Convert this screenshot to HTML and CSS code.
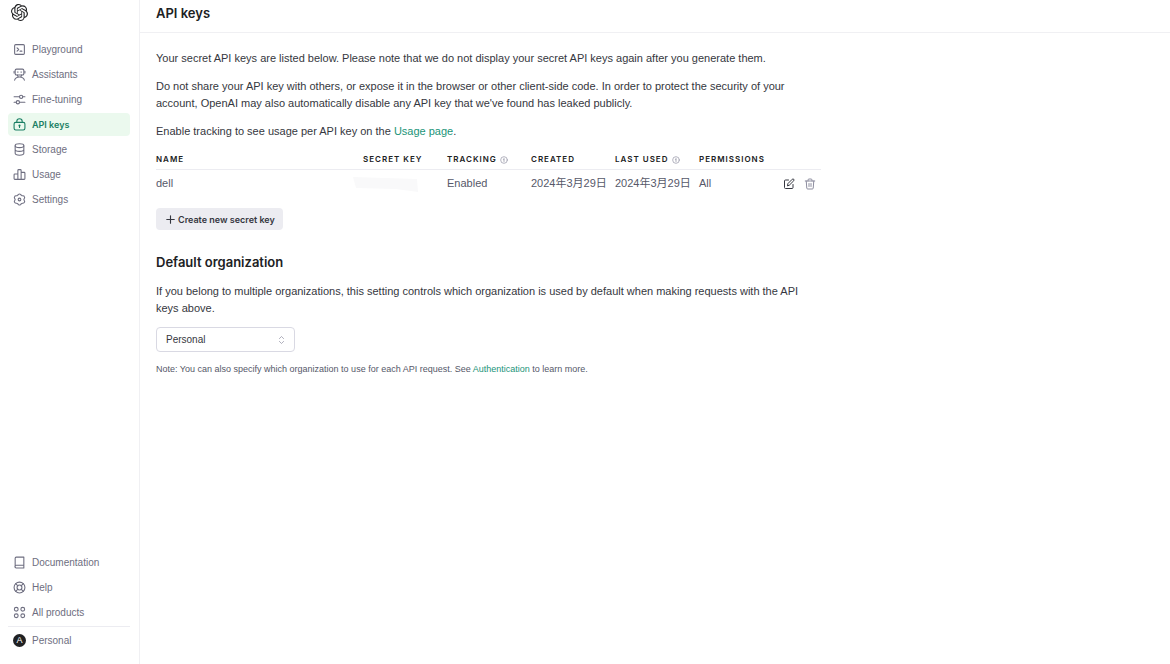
FILE: index.html
```html
<!DOCTYPE html>
<html lang="en">
<head>
    <meta charset="UTF-8">
    <meta name="viewport" content="width=device-width, initial-scale=1.0">
    <title>API keys</title>
    <link rel="stylesheet" href="styles.css">
</head>
<body>
    <aside class="sidebar">
        <a class="logo" href="#" aria-label="Home">
            <svg viewBox="0 0 24 24" fill="currentColor"><path d="M22.2819 9.8211a5.9847 5.9847 0 0 0-.5157-4.9108 6.0462 6.0462 0 0 0-6.5098-2.9A6.0651 6.0651 0 0 0 4.9807 4.1818a5.9847 5.9847 0 0 0-3.9977 2.9 6.0462 6.0462 0 0 0 .7427 7.0966 5.98 5.98 0 0 0 .511 4.9107 6.051 6.051 0 0 0 6.5146 2.9001A5.9847 5.9847 0 0 0 13.2599 24a6.0557 6.0557 0 0 0 5.7718-4.2058 5.9894 5.9894 0 0 0 3.9977-2.9001 6.0557 6.0557 0 0 0-.7475-7.0729zm-9.022 12.6081a4.4755 4.4755 0 0 1-2.8764-1.0408l.1419-.0804 4.7783-2.7582a.7948.7948 0 0 0 .3927-.6813v-6.7369l2.02 1.1686a.071.071 0 0 1 .038.052v5.5826a4.504 4.504 0 0 1-4.4945 4.4944zm-9.6607-4.1254a4.4708 4.4708 0 0 1-.5346-3.0137l.142.0852 4.783 2.7582a.7712.7712 0 0 0 .7806 0l5.8428-3.3685v2.3324a.0804.0804 0 0 1-.0332.0615L9.74 19.9502a4.4992 4.4992 0 0 1-6.1408-1.6464zM2.3408 7.8956a4.485 4.485 0 0 1 2.3655-1.9728V11.6a.7664.7664 0 0 0 .3879.6765l5.8144 3.3543-2.0201 1.1685a.0757.0757 0 0 1-.071 0l-4.8303-2.7865A4.504 4.504 0 0 1 2.3408 7.872zm16.5963 3.8558L13.1038 8.364 15.1192 7.2a.0757.0757 0 0 1 .071 0l4.8303 2.7913a4.4944 4.4944 0 0 1-.6765 8.1042v-5.6772a.79.79 0 0 0-.407-.667zm2.0107-3.0231l-.142-.0852-4.7735-2.7818a.7759.7759 0 0 0-.7854 0L9.409 9.2297V6.8974a.0662.0662 0 0 1 .0284-.0615l4.8303-2.7866a4.4992 4.4992 0 0 1 6.6802 4.66zM8.3065 12.863l-2.02-1.1638a.0804.0804 0 0 1-.038-.0567V6.0742a4.4992 4.4992 0 0 1 7.3757-3.4537l-.142.0805L8.704 5.459a.7948.7948 0 0 0-.3927.6813zm1.0976-2.3654l2.602-1.4998 2.6069 1.4998v2.9994l-2.5974 1.4997-2.6067-1.4997Z"/></svg>
        </a>

        <nav class="nav">
            <a class="nav-item" href="#">
                <svg class="icon" viewBox="0 0 24 24"><rect x="3" y="3" width="18" height="18" rx="2"/><path d="M7.500 9l3 3-3 3M13 15h3.500"/></svg>
                Playground
            </a>
            <a class="nav-item" href="#">
                <svg class="icon" viewBox="0 0 24 24"><rect x="4" y="2" width="16" height="11" rx="2.500"/><path d="M2 6v3M22 6v3M9 7v1M15 7v1M8 13l1.500 3.500M16 13l-1.500 3.500M3 22.500c1-4 4-6 9-6s8 2 9 6"/></svg>
                Assistants
            </a>
            <a class="nav-item" href="#">
                <svg class="icon" viewBox="0 0 24 24"><circle cx="15" cy="7" r="3"/><circle cx="9" cy="17" r="3"/><path d="M2 7h10M18 7h4M2 17h4M12 17h10"/></svg>
                Fine-tuning
            </a>
            <a class="nav-item active" href="#" aria-current="page">
                <svg class="icon" viewBox="0 0 24 24"><rect x="2" y="8" width="20" height="14" rx="3"/><path d="M7 8V6.500a5 5 0 0 1 10 0V8M12 14v3.500"/><circle cx="12" cy="14" r="1"/></svg>
                API keys
            </a>
            <a class="nav-item" href="#">
                <svg class="icon" viewBox="0 0 24 24"><ellipse cx="12" cy="5" rx="8" ry="3.500"/><path d="M4 5v14c0 2 3.600 3.500 8 3.500s8-1.500 8-3.500V5M4 12c0 2 3.600 3.500 8 3.500s8-1.500 8-3.500"/></svg>
                Storage
            </a>
            <a class="nav-item" href="#">
                <svg class="icon" viewBox="0 0 24 24"><path d="M9 21V4.500A1.500 1.500 0 0 1 10.500 3h3A1.500 1.500 0 0 1 15 4.500V21zM9 21H3.500A1.500 1.500 0 0 1 2 19.500v-7A1.500 1.500 0 0 1 3.500 11H9M15 8h5.500A1.500 1.500 0 0 1 22 9.500v10a1.500 1.500 0 0 1-1.500 1.500H15"/></svg>
                Usage
            </a>
            <a class="nav-item" href="#">
                <svg class="icon" viewBox="0 0 24 24"><path d="M10 2.500q2-1.500 4 0l1.500 2q1 .8 2.500.7 2.500-.2 3.200 2 .8 1.800-.6 3.300-1 1.500 0 3 1.400 1.500.6 3.300-.7 2.200-3.200 2-1.500-.1-2.500.7l-1.500 2q-2 1.500-4 0l-1.500-2q-1-.8-2.500-.7-2.500.2-3.200-2-.8-1.800.6-3.300 1-1.500 0-3Q2 9 2.800 7.200q.7-2.200 3.200-2 1.500.1 2.500-.7z"/><circle cx="12" cy="12" r="2.500"/></svg>
                Settings
            </a>
        </nav>

        <nav class="nav nav-bottom">
            <a class="nav-item" href="#">
                <svg class="icon" viewBox="0 0 24 24"><path d="M4 19.500V4a2 2 0 0 1 2-2h14v20H6a2 2 0 0 1 0-5h14"/></svg>
                Documentation
            </a>
            <a class="nav-item" href="#">
                <svg class="icon" viewBox="0 0 24 24"><circle cx="12" cy="12" r="10"/><circle cx="12" cy="12" r="4.500"/><path d="M5 5l4 4M19 5l-4 4M5 19l4-4M19 19l-4-4"/></svg>
                Help
            </a>
            <a class="nav-item" href="#">
                <svg class="icon" viewBox="0 0 24 24"><circle cx="6" cy="6" r="3.500"/><circle cx="18" cy="6" r="3.500"/><circle cx="6" cy="18" r="3.500"/><circle cx="18" cy="18" r="3.500"/></svg>
                All products
            </a>
        </nav>
        <div class="account">
            <a class="nav-item" href="#">
                <span class="avatar">A</span>
                Personal
            </a>
        </div>
    </aside>

    <main class="main">
        <header class="page-header">
            <h1>API keys</h1>
        </header>

        <div class="content">
            <p>Your secret API keys are listed below. Please note that we do not display your secret API keys again after you generate them.</p>
            <p>Do not share your API key with others, or expose it in the browser or other client-side code. In order to protect the security of your account, OpenAI may also automatically disable any API key that we've found has leaked publicly.</p>
            <p>Enable tracking to see usage per API key on the <a href="#">Usage page</a>.</p>

            <table class="keys">
                <thead>
                    <tr>
                        <th class="col-name">Name</th>
                        <th class="col-data">Secret key</th>
                        <th class="col-data">Tracking <svg class="info" viewBox="0 0 24 24"><circle cx="12" cy="12" r="10"/><path d="M12 11v6M12 7v1M10 11h2"/></svg></th>
                        <th class="col-data">Created</th>
                        <th class="col-data">Last used <svg class="info" viewBox="0 0 24 24"><circle cx="12" cy="12" r="10"/><path d="M12 11v6M12 7v1M10 11h2"/></svg></th>
                        <th class="col-data">Permissions</th>
                        <th class="col-actions"></th>
                    </tr>
                </thead>
                <tbody>
                    <tr>
                        <td>dell</td>
                        <td><svg class="redacted" viewBox="0 0 70 20"><path d="M2 3l64 2 1 13-22-3-40-1z"/></svg></td>
                        <td>Enabled</td>
                        <td>2024年3月29日</td>
                        <td>2024年3月29日</td>
                        <td>All</td>
                        <td>
                            <div class="actions">
                                <button class="icon-btn edit" aria-label="Edit">
                                    <svg class="icon" viewBox="0 0 24 24"><path d="M11 4H5a2 2 0 0 0-2 2v13a2 2 0 0 0 2 2h13a2 2 0 0 0 2-2v-6M9 15l1-4 8.500-8.500a2 2 0 0 1 3 3L13 14z"/></svg>
                                </button>
                                <button class="icon-btn" aria-label="Delete">
                                    <svg class="icon" viewBox="0 0 24 24"><path d="M2.500 6h19M8 6V4a2 2 0 0 1 2-2h4a2 2 0 0 1 2 2v2M4.500 6l1 14a2 2 0 0 0 2 2h9a2 2 0 0 0 2-2l1-14M10 11v6M14 11v6"/></svg>
                                </button>
                            </div>
                        </td>
                    </tr>
                </tbody>
            </table>

            <button class="btn">
                <svg viewBox="0 0 24 24"><path d="M12 2v20M2 12h20"/></svg>
                Create new secret key
            </button>

            <h2>Default organization</h2>
            <p><label for="organization">If you belong to multiple organizations, this setting controls which organization is used by default when making requests with the API keys above.</label></p>

            <div class="select-wrap">
                <select id="organization">
                    <option>Personal</option>
                </select>
                <svg viewBox="0 0 10 14"><path d="M2 5l3-3 3 3M2 9l3 3 3-3"/></svg>
            </div>

            <p class="note">Note: You can also specify which organization to use for each API request. See <a href="#">Authentication</a> to learn more.</p>
        </div>
    </main>
</body>
</html>
```
FILE: styles.css
```css
* {
    box-sizing: border-box;
}

body {
    margin: 0;
    display: flex;
    min-height: 100vh;
    background: #fff;
    color: #353740;
    font-family: "Liberation Sans", "Noto Sans CJK SC", sans-serif;
    font-size: 11px;
    line-height: 17px;
}

a {
    color: #1a9478;
    text-decoration: none;
}

svg {
    display: block;
    flex-shrink: 0;
}

.icon,
.info,
.btn svg,
.select-wrap svg {
    fill: none;
    stroke: currentColor;
    stroke-width: 2;
    stroke-linecap: round;
    stroke-linejoin: round;
}

/* Headings, buttons and other semibold text */
h1,
h2,
.keys th,
.btn,
.nav-item.active {
    font-family: Inter, sans-serif;
    font-weight: 600;
}

/* Sidebar */
.sidebar {
    display: flex;
    flex-direction: column;
    flex-shrink: 0;
    width: 140px;
    padding: 4px 9px 12px 8px;
    border-right: 1px solid #f0f0f3;
}

.logo {
    width: 17px;
    margin: 0 0 17px 3px;
    color: #202123;
}

.logo svg {
    width: 17px;
    height: 17px;
}

.nav {
    display: flex;
    flex-direction: column;
    gap: 2px;
}

.nav-bottom {
    margin-top: auto;
}

.nav-item {
    display: flex;
    align-items: center;
    gap: 6px;
    height: 23px;
    padding: 0 5px;
    border-radius: 4px;
    color: #6e6e80;
    font-size: 10px;
}

.nav-item .icon {
    width: 13px;
    height: 13px;
}

.nav-item.active {
    background: #ebf9ee;
    color: #1a7f64;
    font-size: 9px;
}

.account {
    margin-top: 2px;
    padding-top: 2px;
    border-top: 1px solid #ececf1;
}

.avatar {
    width: 13px;
    height: 13px;
    border-radius: 50%;
    background: #202123;
    color: #fff;
    font-size: 9px;
    line-height: 13px;
    text-align: center;
}

/* Main area */
.main {
    flex: 1;
    min-width: 0;
}

.page-header {
    height: 33px;
    padding: 3px 16px;
    border-bottom: 1px solid #f0f0f3;
}

h1,
h2 {
    margin: 0;
    color: #202123;
    font-size: 13px;
    line-height: 20px;
}

.content {
    max-width: 697px;
    padding: 17px 16px;
}

p {
    margin: 0 0 11px;
}

/* Keys table */
.keys {
    width: 100%;
    margin-bottom: 10px;
    table-layout: fixed;
    border-collapse: collapse;
    color: #565869;
}

.keys th,
.keys td {
    padding: 0;
    text-align: left;
    white-space: nowrap;
}

.keys th {
    height: 18px;
    border-bottom: 1px solid #ececf1;
    color: #202123;
    font-size: 8px;
    letter-spacing: 1px;
    text-transform: uppercase;
}

.keys td {
    height: 29px;
}

.col-data {
    width: 84px;
}

.col-actions {
    width: 38px;
}

.info {
    display: inline-block;
    width: 8px;
    height: 8px;
    color: #8e8ea0;
    vertical-align: text-bottom;
}

.redacted {
    width: 70px;
    height: 20px;
    margin-left: -12px;
    fill: #f9f9fa;
}

.actions {
    display: flex;
    gap: 9px;
}

.icon-btn {
    padding: 0;
    border: 0;
    background: none;
    color: #8e8ea0;
    cursor: pointer;
}

.icon-btn.edit {
    color: #353740;
}

.icon-btn .icon {
    width: 12px;
    height: 12px;
}

.btn {
    display: flex;
    align-items: center;
    gap: 3px;
    height: 22px;
    margin-bottom: 22px;
    padding: 0 8px 0 10px;
    border: 0;
    border-radius: 4px;
    background: #ececf1;
    color: #353740;
    font-size: 9px;
    cursor: pointer;
}

.btn svg {
    width: 9px;
    height: 9px;
    stroke-width: 3;
}

h2 {
    margin-bottom: 11px;
}

/* Organization picker */
.select-wrap {
    position: relative;
    width: 139px;
    margin: -1px 0 9px;
}

.select-wrap select {
    display: block;
    width: 100%;
    height: 25px;
    padding: 0 9px;
    appearance: none;
    border: 1px solid #d9d9e3;
    border-radius: 4px;
    background: #fff;
    color: #353740;
    font-family: inherit;
    font-size: 10px;
}

.select-wrap svg {
    position: absolute;
    top: 8px;
    right: 10px;
    width: 7px;
    height: 10px;
    color: #8e8ea0;
    stroke-width: 1;
    pointer-events: none;
}

.note {
    color: #565869;
    font-size: 9px;
}
```
